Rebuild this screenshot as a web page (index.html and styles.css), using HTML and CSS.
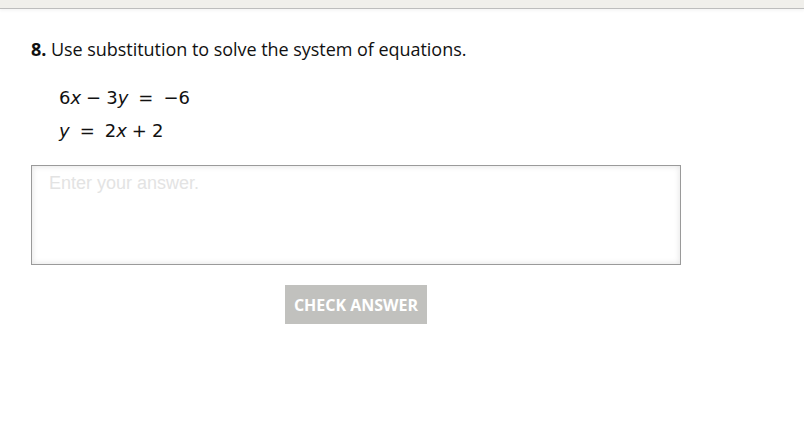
FILE: index.html
```html
<!DOCTYPE html>
<html>
<head>
<meta charset="utf-8">
<link rel="stylesheet" href="styles.css">
</head>
<body>
<div class="topbar"></div>
<main class="content">
  <p class="question"><b>8.</b> Use substitution to solve the system of equations.</p>
  <div class="equations">
    <div class="eq">6<i>x</i><span class="op">−</span>3<i>y</i><span class="rel">=</span>−6</div>
    <div class="eq"><i>y</i><span class="rel">=</span>2<i>x</i><span class="op">+</span>2</div>
  </div>
  <textarea class="answer" placeholder="Enter your answer."></textarea>
  <div class="actions">
    <button class="check">CHECK ANSWER</button>
  </div>
</main>
</body>
</html>
```
FILE: styles.css
```css
html, body {
  margin: 0;
  padding: 0;
  background: #fff;
}
body {
  font-family: "Open Sans", "Noto Sans", sans-serif;
  color: #111;
}
.topbar {
  height: 8px;
  background: #f0efeb;
  border-bottom: 1px solid #bdbdbd;
  box-shadow: 0 2px 3px rgba(0,0,0,0.04);
}
.content {
  padding: 28px 0 0 31px;
}
.question {
  margin: 0;
  font-size: 18px;
  line-height: 24px;
  letter-spacing: -0.04px;
}
.question b {
  font-weight: 700;
}
.equations {
  padding: 20px 0 0 28px;
  font-family: "DejaVu Sans", sans-serif;
  font-size: 18px;
  color: #111;
}
.eq {
  line-height: 33px;
}
.eq i {
  font-style: italic;
}
.op {
  margin: 0 5px;
}
.rel {
  margin: 0 10px;
}
.answer {
  display: block;
  box-sizing: border-box;
  width: 650px;
  height: 100px;
  margin-top: 18px;
  border: 1px solid #9a9a9a;
  box-shadow: inset 0 0 6px rgba(0,0,0,0.12);
  padding: 7px 17px;
  font-family: "Liberation Sans", Arial, sans-serif;
  font-size: 18px;
  resize: none;
  outline: none;
}
.answer::placeholder {
  color: #e3e3e3;
}
.actions {
  width: 650px;
  display: flex;
  justify-content: center;
  padding-top: 20px;
}
.check {
  width: 142px;
  height: 39px;
  background: #c1c1be;
  border: none;
  color: #fff;
  font-family: "Open Sans", "Noto Sans", sans-serif;
  font-weight: 700;
  font-size: 16px;
  padding: 0;
}
```
